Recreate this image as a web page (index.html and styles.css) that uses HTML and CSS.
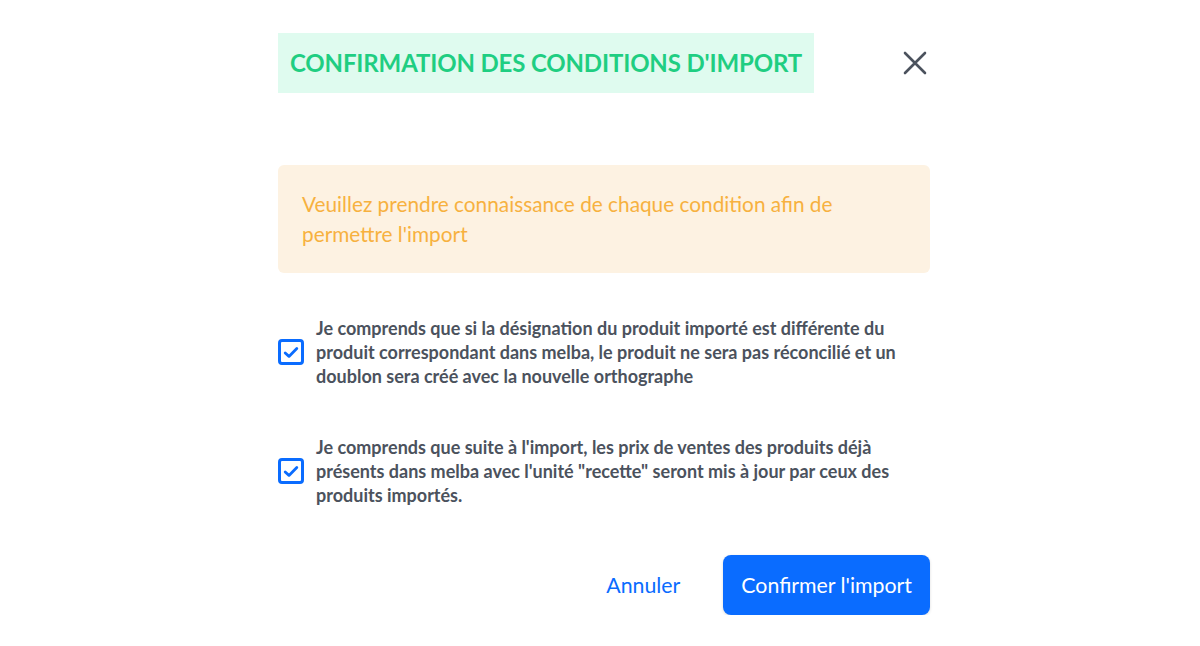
FILE: index.html
```html
<!DOCTYPE html>
<html lang="fr">
<head>
<meta charset="utf-8">
<link rel="stylesheet" href="styles.css">
</head>
<body>
<div class="page">
<div class="modal">
  <div class="header">
    <h1 class="title">CONFIRMATION DES CONDITIONS D'IMPORT</h1>
    <button class="close" aria-label="Fermer">
      <svg width="24" height="24" viewBox="0 0 24 24"><path d="M2 2L22 22M22 2L2 22" stroke="#4b525d" stroke-width="2.6" stroke-linecap="round" fill="none"/></svg>
    </button>
  </div>
  <div class="alert">Veuillez prendre connaissance de chaque condition afin de permettre l'import</div>
  <label class="check">
    <span class="box"><svg width="16" height="13" viewBox="0 0 16 13"><path d="M2.2 7L6 10.4L13.8 2.6" stroke="#0a6cff" stroke-width="2.8" stroke-linecap="round" stroke-linejoin="round" fill="none"/></svg></span>
    <span class="text">Je comprends que si la désignation du produit importé est différente du produit correspondant dans melba, le produit ne sera pas réconcilié et un doublon sera créé avec la nouvelle orthographe</span>
  </label>
  <label class="check">
    <span class="box"><svg width="16" height="13" viewBox="0 0 16 13"><path d="M2.2 7L6 10.4L13.8 2.6" stroke="#0a6cff" stroke-width="2.8" stroke-linecap="round" stroke-linejoin="round" fill="none"/></svg></span>
    <span class="text">Je comprends que suite à l'import, les prix de ventes des produits déjà présents dans melba avec l'unité "recette" seront mis à jour par ceux des produits importés.</span>
  </label>
  <div class="actions">
    <button class="btn-link">Annuler</button>
    <button class="btn-primary">Confirmer l'import</button>
  </div>
</div>
</div>
</body>
</html>
```

FILE: styles.css
```css
* { box-sizing: border-box; }
html, body { margin: 0; padding: 0; background: #fff; }
body { font-family: Lato, "Open Sans", sans-serif; }
.page { padding-left: 8px; }
.modal {
  width: 652px;
  margin: 0 auto;
  padding-top: 33px;
  display: flex;
  flex-direction: column;
}
.header {
  display: flex;
  justify-content: space-between;
  align-items: center;
}
.title {
  margin: 0;
  background: #dffbef;
  color: #1fce82;
  font-size: 24px;
  font-weight: 700;
  line-height: 60px;
  height: 60px;
  padding: 0 12px;
  letter-spacing: -0.15px;
}
.close {
  border: 0;
  background: none;
  padding: 0;
  margin-right: 3px;
  width: 24px;
  height: 24px;
  display: flex;
  align-items: center;
  justify-content: center;
}
.alert {
  margin-top: 72px;
  background: #fdf2e2;
  border-radius: 6px;
  color: #f7b13f;
  font-size: 20.8px;
  line-height: 30px;
  padding: 24px 60px 24px 24px;
  min-height: 108px;
}
.check {
  display: flex;
  align-items: center;
  gap: 12px;
  margin-top: 43px;
}
.check + .check { margin-top: 47px; }
.box {
  flex: none;
  width: 26px;
  height: 26px;
  border: 3px solid #0a6cff;
  border-radius: 4px;
  display: flex;
  align-items: center;
  justify-content: center;
}
.text {
  color: #4b525d;
  font-size: 18px;
  font-weight: 700;
  line-height: 24px;
}
.actions {
  margin-top: 48px;
  display: flex;
  justify-content: flex-end;
  align-items: center;
  gap: 43px;
}
.btn-link {
  border: 0;
  background: none;
  font-family: inherit;
  font-size: 21.3px;
  color: #0a6cff;
  padding: 0;
}
.btn-primary {
  border: 0;
  background: #0a6cff;
  color: #fff;
  font-family: inherit;
  font-size: 21.3px;
  height: 60px;
  padding: 0 18px;
  border-radius: 8px;
  box-shadow: 0 1px 3px rgba(0,0,0,0.15);
}
```
